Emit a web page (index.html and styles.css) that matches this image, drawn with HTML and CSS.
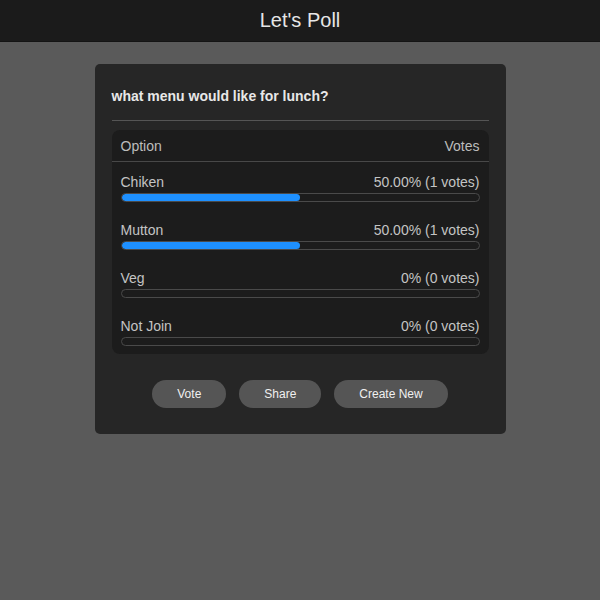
FILE: index.html
```html
<!DOCTYPE html>
<html>
<head>
<meta charset="utf-8">
<link rel="stylesheet" href="styles.css">
</head>
<body>
<header class="topbar"><h1 class="title">Let's Poll</h1></header>
<main class="page">
  <section class="card">
    <h2 class="question">what menu would like for lunch?</h2>
    <div class="results">
      <div class="results-head"><span>Option</span><span>Votes</span></div>
      <div class="row">
        <div class="row-line"><span>Chiken</span><span>50.00% (1 votes)</span></div>
        <div class="bar"><div class="fill" style="width:50%"></div></div>
      </div>
      <div class="row">
        <div class="row-line"><span>Mutton</span><span>50.00% (1 votes)</span></div>
        <div class="bar"><div class="fill" style="width:50%"></div></div>
      </div>
      <div class="row">
        <div class="row-line"><span>Veg</span><span>0% (0 votes)</span></div>
        <div class="bar"><div class="fill" style="width:0%"></div></div>
      </div>
      <div class="row">
        <div class="row-line"><span>Not Join</span><span>0% (0 votes)</span></div>
        <div class="bar"><div class="fill" style="width:0%"></div></div>
      </div>
    </div>
    <div class="actions">
      <button class="btn">Vote</button>
      <button class="btn">Share</button>
      <button class="btn">Create New</button>
    </div>
  </section>
</main>
</body>
</html>
```
FILE: styles.css
```css
html, body {
  margin: 0;
  padding: 0;
  background: #5a5a5a;
  font-family: "Liberation Sans", Arial, sans-serif;
  height: 100%;
}
.topbar {
  height: 42px;
  background: #1b1b1b;
  border-bottom: 1px solid #141414;
  box-sizing: border-box;
  display: flex;
  align-items: center;
  justify-content: center;
}
.title {
  margin: 0;
  font-size: 20px;
  font-weight: normal;
  color: #e6e6e6;
}
.page {
  display: flex;
  justify-content: center;
  padding-top: 22px;
}
.card {
  width: 411px;
  box-sizing: border-box;
  background: #262626;
  border-radius: 5px;
  padding: 24px 17px 26px;
}
.question {
  margin: 0;
  font-size: 14px;
  font-weight: bold;
  color: #e8e8e8;
  line-height: 17px;
  padding-bottom: 15px;
  border-bottom: 1px solid #555;
  margin-bottom: 9px;
}
.results {
  background: #1c1c1c;
  border-radius: 8px;
}
.results-head {
  display: flex;
  justify-content: space-between;
  height: 31px;
  align-items: center;
  padding: 0 9px;
  border-bottom: 1px solid #484848;
  font-size: 14px;
  color: #bdbdbd;
}
.row {
  padding: 12px 9px 8px;
}
.row-line {
  display: flex;
  justify-content: space-between;
  font-size: 14px;
  line-height: 17px;
  color: #c4c4c4;
  margin-bottom: 2px;
}
.bar {
  height: 9px;
  box-sizing: border-box;
  border: 1px solid #4a4a4a;
  border-radius: 5px;
  background: #1c1c1c;
  overflow: hidden;
}
.fill {
  height: 100%;
  background: #1e90ff;
  border-radius: 5px;
}
.actions {
  display: flex;
  justify-content: center;
  gap: 13px;
  margin-top: 26px;
}
.btn {
  height: 28px;
  padding: 0 25px;
  border: none;
  border-radius: 14px;
  background: #555;
  color: #f0f0f0;
  font-family: "Liberation Sans", Arial, sans-serif;
  font-size: 12px;
}
```
